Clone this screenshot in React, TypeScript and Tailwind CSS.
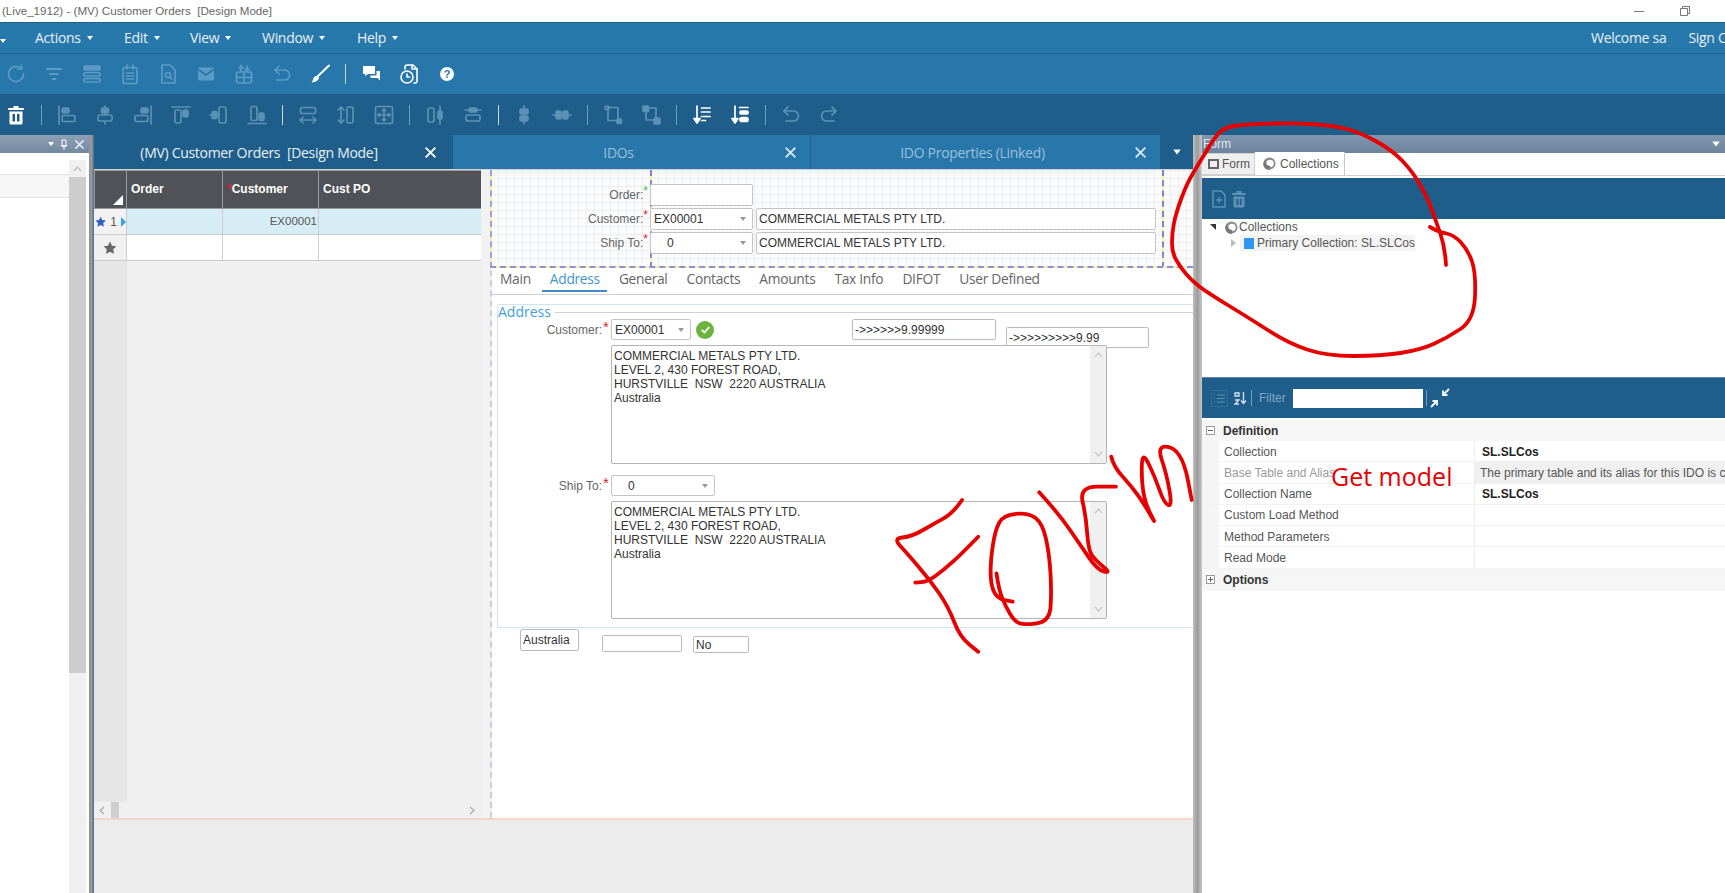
import React from "react";

const ARIAL = "font-['Liberation_Sans',Arial,sans-serif]";
const UI = "font-['Open_Sans',sans-serif]";

function Ic({ children, c = "text-[#5c9bc5]", w = 1.7 }: { children: React.ReactNode; c?: string; w?: number }) {
  return (
    <svg width="24" height="24" viewBox="0 0 24 24" fill="none" stroke="currentColor" strokeWidth={w} strokeLinecap="round" strokeLinejoin="round" className={c}>
      {children}
    </svg>
  );
}

const D2 = "text-[#5b92b6]";
const WH = "text-white";
const D1 = "text-[#5c9bc5]";

function Slot({ children }: { children: React.ReactNode }) {
  return <div className="w-[38px] h-full flex items-center justify-center shrink-0">{children}</div>;
}
function Sep({ bright = false }: { bright?: boolean }) {
  return (
    <div className="w-[13px] h-full flex items-center justify-center shrink-0">
      <div className={`w-[1px] h-[20px] ${bright ? "bg-[#c9d9e5]" : "bg-[#6da0c2]"}`} />
    </div>
  );
}

function Caret({ c = "border-t-white", cls = "" }: { c?: string; cls?: string }) {
  return <span className={`inline-block w-0 h-0 border-l-[3.5px] border-r-[3.5px] border-t-[4px] border-l-transparent border-r-transparent ${c} ${cls}`} />;
}

function MenuItem({ label, w }: { label: string; w: number }) {
  return (
    <div className="flex items-center gap-[6px] shrink-0" style={{ width: w }}>
      <span>{label}</span>
      <Caret />
    </div>
  );
}

function CloseX({ c = "text-white", s = 14 }: { c?: string; s?: number }) {
  return (
    <svg width={s} height={s} viewBox="0 0 14 14" className={`${c} shrink-0`} stroke="currentColor" strokeWidth="2" strokeLinecap="square">
      <path d="M2.5 2.5l9 9M11.5 2.5l-9 9" />
    </svg>
  );
}

function MainTab({ label, w, active, dim, pr }: { label: string; w: number; active?: boolean; dim?: boolean; pr: number }) {
  return (
    <div
      className={`h-full flex items-center border-r border-[#1f5e8a] shrink-0 ${active ? "bg-[#1f5e8a]" : "bg-[#2777aa]"}`}
      style={{ width: w, paddingRight: pr }}
    >
      <span className={`flex-1 text-center whitespace-pre text-[14px] tracking-[-0.3px] ${dim ? "text-[#9cc0da]" : "text-[#e8f0f6]"}`}>{label}</span>
      <CloseX c={dim ? "text-[#dbe8f1]" : "text-white"} s={13} />
    </div>
  );
}

function Star({ c = "text-[#e02020]", cls = "" }: { c?: string; cls?: string }) {
  return <span className={`${c} ${cls} leading-none`}>*</span>;
}

function Combo({ value, w, pad = 3 }: { value: string; w: number; pad?: number }) {
  return (
    <div className="h-full bg-white border border-[#c4c4c4] rounded-[2px] flex items-center justify-between pr-[6px] shrink-0 text-[#333]" style={{ width: w, paddingLeft: pad }}>
      <span>{value}</span>
      <Caret c="border-t-[#999]" />
    </div>
  );
}

function TextBox({ lines, h }: { lines: string[]; h: number }) {
  return (
    <div className="relative ml-[113px] w-[496px] bg-white border border-[#b5b5b5] rounded-[2px] flex text-[12px] leading-[13.9px] text-[#333] shrink-0" style={{ height: h }}>
      <div className="flex-1 pl-[2px] pt-[4px]">
        {lines.map((l, i) => (
          <div key={i} className="whitespace-pre">{l}</div>
        ))}
      </div>
      <div className="w-[16px] bg-[#f0f0f0] flex flex-col items-center justify-between py-[6px] text-[#c8c8c8]">
        <svg width="9" height="6" viewBox="0 0 9 6" fill="none" stroke="currentColor" strokeWidth="1.2"><path d="M1 5l3.5-4L8 5" /></svg>
        <svg width="9" height="6" viewBox="0 0 9 6" fill="none" stroke="currentColor" strokeWidth="1.2"><path d="M1 1l3.5 4L8 1" /></svg>
      </div>
    </div>
  );
}

function Swirl({ cls = "" }: { cls?: string }) {
  return (
    <svg width="13" height="13" viewBox="0 0 12 12" className={`${cls} shrink-0`}>
      <circle cx="6" cy="6" r="5.5" fill="#8a8a8a" />
      <circle cx="6.5" cy="6" r="3.4" fill="#fff" />
      <path d="M6 12a5.5 5.5 0 0 1-4-9.5C1.5 6 3.5 8 7 8.5 6 10 6 11 6 12z" fill="#777" />
    </svg>
  );
}

function Prop({ name, value, bold, gray, shade }: { name: string; value?: string; bold?: boolean; gray?: boolean; shade?: boolean }) {
  return (
    <div className="h-[21.25px] flex border-b border-[#f2f2f2]">
      <div className="w-[17px] bg-[#f5f5f5] shrink-0" />
      <div className={`w-[256px] pl-[5px] pt-[1px] flex items-center shrink-0 border-r border-[#eee] whitespace-nowrap overflow-hidden ${gray ? "text-[#999]" : "text-[#555]"}`}>{name}</div>
      <div className={`flex-1 flex items-center pl-[5px] pt-[1px] whitespace-nowrap overflow-hidden ${bold ? "font-bold text-[#222] pl-[7px]" : "text-[#555]"} ${shade ? "bg-[#f0f0f0]" : ""}`}>{value}</div>
    </div>
  );
}

function Section({ open, label, h }: { open: boolean; label: string; h: string }) {
  return (
    <div className={`${h} bg-[#f6f6f6] flex items-center pl-[4px]`}>
      <div className="w-[9px] h-[9px] border border-[#999] flex items-center justify-center relative bg-white mr-[8px]">
        <div className="w-[5px] h-[1px] bg-[#666]" />
        {!open && <div className="absolute w-[1px] h-[5px] bg-[#666]" />}
      </div>
      <span className="font-bold text-[#333]">{label}</span>
    </div>
  );
}

/* ---------- hand-drawn annotation ---------- */
type P = [number, number];
function path(ox: number, sx: number, oy: number, pts: P[], sy = 3) {
  const m = pts.map(([x, y]) => [ox + x / sx, oy + y / sy] as P);
  let d = `M${m[0][0].toFixed(1)} ${m[0][1].toFixed(1)}`;
  for (let i = 1; i < m.length - 1; i++) {
    const mx = (m[i][0] + m[i + 1][0]) / 2;
    const my = (m[i][1] + m[i + 1][1]) / 2;
    d += ` Q${m[i][0].toFixed(1)} ${m[i][1].toFixed(1)} ${mx.toFixed(1)} ${my.toFixed(1)}`;
  }
  const l = m[m.length - 1];
  d += ` L${l[0].toFixed(1)} ${l[1].toFixed(1)}`;
  return d;
}

const strokes: string[] = [
  path(0, 1, 0, [[1446, 265], [1445, 247], [1435.5, 220], [1428.5, 200], [1413, 172], [1392, 150], [1361, 133], [1336, 126], [1298, 123], [1249, 124], [1225, 127], [1215, 137], [1201, 160], [1187, 183], [1176, 213], [1172, 233], [1172, 253], [1181, 268], [1192, 281], [1208, 293], [1249, 318], [1288, 343], [1326, 356], [1381, 356], [1420, 350], [1447, 338], [1474, 320], [1476, 273], [1468, 250], [1454, 235], [1439, 232], [1430, 227]], 1),
  path(480, 2.178, 260, [[1050, 720], [1030, 760], [990, 790], [940, 830], [900, 835], [930, 880], [980, 960], [1020, 1040], [1045, 1130], [1085, 1175]]),
  path(480, 2.178, 260, [[1085, 830], [1050, 880], [1010, 930], [975, 965], [948, 968]]),
  path(480, 2.178, 260, [[1125, 940], [1130, 990], [1145, 1040], [1165, 1085], [1185, 1095], [1240, 1085], [1245, 1000], [1240, 880], [1225, 790], [1195, 758], [1140, 765], [1122, 810], [1112, 900], [1112, 970], [1125, 1015], [1160, 1025]]),
  path(480, 2.178, 260, [[1218, 697], [1260, 760], [1310, 860], [1345, 930], [1375, 940], [1340, 900], [1325, 870], [1320, 770], [1305, 680], [1385, 680]]),
  path(480, 2.178, 260, [[1375, 590], [1380, 620], [1420, 680], [1450, 740], [1475, 800], [1445, 720], [1440, 620], [1445, 580], [1470, 650], [1490, 730], [1508, 740], [1495, 640], [1475, 560], [1510, 560], [1535, 610], [1550, 720]]),
];

const ADDRESS = ["COMMERCIAL METALS PTY LTD.", "LEVEL 2, 430 FOREST ROAD,", "HURSTVILLE  NSW  2220 AUSTRALIA", "Australia"];

export default function App() {
  return (
    <div className={`relative w-[1725px] h-[893px] overflow-hidden bg-white ${UI}`}>
      {/* title bar */}
      <div className={`h-[23px] border-b border-[#1d5f88] bg-white flex items-center text-[11.6px] text-[#666] ${ARIAL}`}>
        <span className="pl-[2px] whitespace-pre flex-1">(Live_1912) - (MV) Customer Orders  [Design Mode]</span>
        <div className="w-[10px] h-[1px] bg-[#777] mr-[36px]" />
        <svg width="10" height="10" viewBox="0 0 10 10" fill="none" stroke="#777" className="mr-[35px]"><path d="M.5 2.5h7v7h-7zM2.5 2.5v-2h7v7h-2" /></svg>
      </div>

      {/* menu */}
      <div className="h-[31px] bg-[#2778ab] border-b border-[#1f6491] flex items-center pb-[1px] text-[14px] tracking-[-0.3px] text-[#e9f1f7]">
        <div className="w-[35px] shrink-0"><Caret /></div>
        <MenuItem label="Actions" w={89} />
        <MenuItem label="Edit" w={66} />
        <MenuItem label="View" w={72} />
        <MenuItem label="Window" w={95} />
        <MenuItem label="Help" w={60} />
        <div className="flex-1" />
        <div className="w-[134px] overflow-hidden whitespace-nowrap flex shrink-0 gap-[22px]">
          <span>Welcome sa</span>
          <span>Sign Out</span>
        </div>
      </div>

      {/* toolbar 1 */}
      <div className="h-[40px] bg-[#2777aa] flex items-center ml-[-3px]">
        <Slot><Ic><path d="M19.5 12a7.5 7.5 0 1 1-2.4-5.5" /><path d="M17.5 3v4h-4" /></Ic></Slot>
        <Slot><Ic w={2}><path d="M5 7h14M8 12h8M10.5 17h3" /></Ic></Slot>
        <Slot><Ic><rect x="4" y="4" width="16" height="4" rx="1" fill="currentColor" /><rect x="4" y="10.5" width="16" height="3.5" rx="1" /><rect x="4" y="16.5" width="16" height="3.5" rx="1" /></Ic></Slot>
        <Slot><Ic><rect x="5" y="5.5" width="14" height="16" rx="2" /><path d="M9 3v4M15 3v4M8.5 11h7M8.5 14h7M8.5 17h7" /></Ic></Slot>
        <Slot><Ic><path d="M6 3h8l5 5v13H6z" /><circle cx="12" cy="13" r="2.5" /><path d="M14 15l2 2" /></Ic></Slot>
        <Slot><svg width="24" height="24" viewBox="0 0 24 24" className={D1}><rect x="4" y="5.5" width="16" height="13" rx="1.5" fill="currentColor" /><path d="M4.5 7.5L12 13l7.5-5.5" fill="none" stroke="#2777aa" strokeWidth="1.6" /></svg></Slot>
        <Slot><Ic><rect x="4.5" y="10" width="15" height="11" rx="1.5" /><path d="M4.5 15.5h15M12 10v11" /><path d="M9 9V4M7 6l2-2.5L11 6" /><path d="M15 4v5M13 7l2 2 2-2" /></Ic></Slot>
        <Slot><Ic><path d="M5 8h9.5a5 5 0 0 1 0 10H7" /><path d="M9 4L5 8l4 4" /></Ic></Slot>
        <Slot><svg width="24" height="24" viewBox="0 0 24 24" className={WH}><path d="M21 3.5L9.5 14.5" stroke="currentColor" strokeWidth="2" strokeLinecap="round" /><path d="M8.5 14c2 0 3 1.500 2 3.200-1.200 2-4 3-7 3.300 1.500-1.500 1.300-3 2-4.500.5-1.200 1.700-2 3-2z" fill="currentColor" /></svg></Slot>
        <Sep bright />
        <Slot><svg width="24" height="24" viewBox="0 0 24 24" className={WH} fill="currentColor"><path d="M4 4h12v8H9l-3 2v-2H4z" /><path d="M17.500 9H21v9.500l-2.500-2.500H11.500v-2.500h6z" /></svg></Slot>
        <Slot><Ic c={WH} w={1.6}><path d="M8 7V4.500a2 2 0 0 1 2-1.500h6l4 4v12a2 2 0 0 1-2 2h-1" /><path d="M15 3v4h5" /><circle cx="10" cy="15" r="6" /><path d="M10 12v3h2.500" /></Ic></Slot>
        <Slot><div className={`w-[14px] h-[14px] rounded-full bg-white text-[#2777aa] text-[11px] font-bold flex items-center justify-center leading-none ${ARIAL}`}>?</div></Slot>
      </div>

      {/* toolbar 2 */}
      <div className="h-[41px] bg-[#1f5e8a] flex items-center ml-[-3px]">
        <Slot><svg width="24" height="24" viewBox="0 0 24 24" className={WH} fill="currentColor"><rect x="4" y="5" width="16" height="2" rx="1" /><rect x="9.500" y="3" width="5" height="2" /><path d="M5.500 8.500h13V20a1.500 1.500 0 0 1-1.500 1.500H7A1.500 1.500 0 0 1 5.500 20z" /><rect x="8.500" y="11" width="2.500" height="7.500" fill="#1f5e8a" /><rect x="13" y="11" width="2.500" height="7.500" fill="#1f5e8a" /></svg></Slot>
        <Sep />
        <Slot><Ic c={D2}><path d="M4 3v18" /><rect x="7" y="5" width="7" height="5" rx="1.500" fill="currentColor" /><rect x="7" y="12.500" width="13" height="6" rx="1.500" /></Ic></Slot>
        <Slot><Ic c={D2}><path d="M12 3v18" /><rect x="8.500" y="5" width="7" height="5" rx="1.500" fill="currentColor" /><rect x="5" y="12" width="14" height="6" rx="1.500" fill="#1f5e8a" /></Ic></Slot>
        <Slot><Ic c={D2}><path d="M20 3v18" /><rect x="10" y="5" width="7" height="5" rx="1.500" fill="currentColor" /><rect x="4" y="12.500" width="13" height="6" rx="1.500" /></Ic></Slot>
        <Slot><Ic c={D2}><path d="M3 4h18" /><rect x="6" y="7" width="6" height="13" rx="1.500" /><rect x="14" y="7" width="5" height="7" rx="1.500" fill="currentColor" /></Ic></Slot>
        <Slot><Ic c={D2}><path d="M3 12h8" /><rect x="5" y="8.500" width="5" height="7" rx="1.500" fill="currentColor" /><rect x="12" y="4" width="7" height="16" rx="2" /></Ic></Slot>
        <Slot><Ic c={D2}><path d="M3 20.500h18" /><rect x="6" y="3.500" width="6" height="14" rx="1.500" /><rect x="14" y="10" width="5" height="7.500" rx="1.500" fill="currentColor" /></Ic></Slot>
        <Sep bright />
        <Slot><Ic c={D2}><rect x="4.500" y="4.500" width="15" height="6" rx="1.500" /><path d="M4 17h16M7 14l-3 3 3 3M17 14l3 3-3 3" /></Ic></Slot>
        <Slot><Ic c={D2}><path d="M7 4v16M4 7l3-3 3 3M4 17l3 3 3-3" /><rect x="13" y="4" width="6" height="16" rx="1.500" /></Ic></Slot>
        <Slot><Ic c={D2}><rect x="3.500" y="3.500" width="17" height="17" rx="1.500" /><path d="M12 6v12M6 12h12M10.500 7.500L12 6l1.500 1.500M10.500 16.500L12 18l1.500-1.500M7.500 10.500L6 12l1.500 1.500M16.500 10.500L18 12l-1.500 1.500" /></Ic></Slot>
        <Sep />
        <Slot><Ic c={D2}><rect x="5" y="5" width="6" height="14" rx="2" /><path d="M17 3v18" /><rect x="15" y="8" width="4" height="8" rx="1.500" fill="currentColor" /></Ic></Slot>
        <Slot><Ic c={D2}><path d="M4 7h16" /><rect x="8" y="5" width="8" height="4" rx="1.500" fill="currentColor" /><rect x="5" y="12" width="14" height="6" rx="2" /></Ic></Slot>
        <Sep bright />
        <Slot><Ic c={D2}><path d="M12 3v18" /><rect x="8" y="6" width="8" height="5" rx="1.500" fill="currentColor" /><rect x="8" y="13" width="8" height="5" rx="1.500" fill="currentColor" /></Ic></Slot>
        <Slot><Ic c={D2}><path d="M3 12h18" /><rect x="6" y="8" width="5" height="8" rx="1.500" fill="currentColor" /><rect x="13" y="8" width="5" height="8" rx="1.500" fill="currentColor" /></Ic></Slot>
        <Sep />
        <Slot><Ic c={D2}><path d="M7 4.500h10v13" /><path d="M7 4.500v13h10" /><rect x="4" y="3" width="4" height="3.500" rx="1" /><rect x="16" y="16" width="4.500" height="4.500" rx="1" fill="currentColor" /></Ic></Slot>
        <Slot><Ic c={D2}><path d="M7 5h10v12H7z" /><rect x="4" y="3" width="5.500" height="5.500" rx="1" fill="currentColor" /><rect x="15" y="15" width="6" height="6" rx="1" fill="currentColor" /></Ic></Slot>
        <Sep />
        <Slot><Ic c={WH}><path d="M7 3v16" /><path d="M4 15.500h6L7 20z" fill="currentColor" /><path d="M11.500 5H20M11.500 9H20M11.500 13.500H20M11.500 17.500h4" /></Ic></Slot>
        <Slot><Ic c={WH}><path d="M7 3v16" /><path d="M4 15.500h6L7 20z" fill="currentColor" /><path d="M11.500 4.500H20" /><rect x="12" y="8" width="8" height="3" rx="1" fill="currentColor" /><rect x="12" y="14.500" width="8" height="4" rx="2" fill="currentColor" /></Ic></Slot>
        <Sep />
        <Slot><Ic c={D2}><path d="M5 8h9.500a5 5 0 0 1 0 10H7" /><path d="M9 4L5 8l4 4" /></Ic></Slot>
        <Slot><Ic c={D2}><path d="M19 8H9.500a5 5 0 0 0 0 10H17" /><path d="M15 4l4 4-4 4" /></Ic></Slot>
      </div>

      {/* workspace */}
      <div className="h-[758px] flex">
        {/* left dock */}
        <div className="w-[89px] flex flex-col shrink-0">
          <div className="h-[18px] bg-gradient-to-b from-[#8ea0b6] to-[#73889f] flex items-center justify-end pr-[4px] gap-[6px] shrink-0">
            <Caret />
            <svg width="8" height="11" viewBox="0 0 8 11" fill="none" stroke="white"><path d="M2 1h4v6H2zM1 7h6M4 7v4" /></svg>
            <CloseX c="text-[#e6edf3]" s={11} />
          </div>
          <div className="flex-1 flex">
            <div className="w-[69px] pt-[21px]">
              <div className="h-[24px] bg-[#f6f6f6] border-y border-[#e4e4e4]" />
            </div>
            <div className="w-[17px] mt-[7px] bg-[#f0f0f0] flex flex-col">
              <div className="h-[17px] flex items-center justify-center text-[#bbb]">
                <svg width="9" height="6" viewBox="0 0 9 6" fill="none" stroke="currentColor" strokeWidth="1.200"><path d="M1 5l3.500-4L8 5" /></svg>
              </div>
              <div className="h-[496px] bg-[#cdcdcd]" />
            </div>
          </div>
        </div>
        <div className="w-[5px] shrink-0 bg-gradient-to-r from-[#8f8f8f] via-[#9a9a9a] to-[#3d6f93]" />

        {/* main */}
        <div className="w-[1099px] shrink-0 flex flex-col">
          <div className="h-[35px] flex items-stretch border-b border-[#d5d5d5] shrink-0">
            <MainTab label="(MV) Customer Orders  [Design Mode]" w={359} active pr={15} />
            <MainTab label="IDOs" w={358} dim pr={13} />
            <MainTab label="IDO Properties (Linked)" w={350} dim pr={13} />
            <div className="w-[32px] bg-[#1f5e8a] flex items-center justify-center"><Caret cls="scale-125" /></div>
          </div>

          <div className="h-[648px] flex shrink-0">
            {/* collection grid */}
            <div className={`w-[396px] shrink-0 flex flex-col bg-[#f2f2f2] text-[12px] ${ARIAL}`}>
              <div className="w-[387px] h-[39px] grid grid-cols-[33px_96px_96px_162px] bg-[#505258] border-y border-[#999] font-bold text-white shrink-0">
                <div className="border-x border-[#999] relative">
                  <div className="absolute right-[3px] bottom-[3px] w-0 h-0 border-l-[10px] border-b-[10px] border-l-transparent border-b-white" />
                </div>
                <div className="border-r border-[#999] pl-[4px] pt-[9px]">Order</div>
                <div className="border-r border-[#999] pl-[4px] pt-[9px]"><span className="text-[#e02020]">*</span>Customer</div>
                <div className="pl-[4px] pt-[9px]">Cust PO</div>
              </div>
              <div className="w-[387px] h-[26px] grid grid-cols-[33px_96px_96px_162px] bg-[#d7edf6] border-b border-[#ccc] text-[#555] shrink-0">
                <div className="bg-[#f2f2f2] border-r border-[#ccc] flex items-center pl-[1px] gap-[4px]">
                  <svg width="12" height="12" viewBox="0 0 24 24" fill="#2d62c8"><path d="M12 1l3.400 7 7.600 1-5.500 5.300L18.800 22 12 18.300 5.200 22l1.300-7.700L1 9l7.600-1z" /></svg>
                  <span className="text-[#555]">1</span>
                  <span className="w-0 h-0 border-y-[5px] border-l-[5px] border-y-transparent border-l-[#3ba0ea]" />
                </div>
                <div className="border-r border-[#ccc]" />
                <div className="border-r border-[#ccc] flex items-center justify-end pr-[1px] text-[11.5px]">EX00001</div>
                <div />
              </div>
              <div className="w-[387px] h-[26px] grid grid-cols-[33px_96px_96px_162px] bg-white border-b border-[#ccc] shrink-0">
                <div className="bg-[#f0f0f0] border-r border-[#ccc] flex items-center justify-center">
                  <svg width="14" height="14" viewBox="0 0 24 24" fill="#666"><path d="M12 1l3.400 7 7.600 1-5.500 5.300L18.800 22 12 18.300 5.200 22l1.300-7.700L1 9l7.600-1z" /></svg>
                </div>
                <div className="border-r border-[#ccc]" />
                <div className="border-r border-[#ccc]" />
                <div />
              </div>
              <div className="w-[387px] flex-1 flex">
                <div className="w-[33px] bg-[#e6e6e6]" />
                <div className="flex-1 bg-[#f0f0f0]" />
              </div>
              <div className="w-[387px] h-[16px] bg-[#f0f0f0] flex items-center shrink-0 text-[#aaa]">
                <svg width="8" height="9" viewBox="0 0 8 9" fill="none" stroke="currentColor" strokeWidth="1.200" className="ml-[4px]"><path d="M6 1L2 4.500 6 8" /></svg>
                <div className="w-[8px] h-full bg-[#cfcfcf] ml-[5px]" />
                <div className="flex-1" />
                <svg width="8" height="9" viewBox="0 0 8 9" fill="none" stroke="currentColor" strokeWidth="1.200" className="mr-[5px]"><path d="M2 1l4 3.500L2 8" /></svg>
              </div>
            </div>

            {/* form canvas */}
            <div className={`relative flex-1 flex flex-col bg-white text-[12px] ${ARIAL}`}>
              <div className="absolute left-0 top-0 bottom-0 w-[2px] bg-[#eef6e6] border-l-2 border-dashed border-[#c4d0ea]" />
              <div className="relative h-[98px] shrink-0 pt-[14px] flex flex-col gap-[2px] bg-[#fbfbfb] bg-[linear-gradient(#edf0f2_1px,transparent_1px),linear-gradient(90deg,#edf0f2_1px,transparent_1px)] bg-[size:8px_8px]">
                <div className="absolute left-0 top-0 bottom-0 w-[2px] bg-[#f6f2a0] border-l-2 border-dashed border-[#9ea2dc]" />
                <div className="absolute left-[160px] top-0 bottom-0 w-[2px] bg-[#f6f2a0] border-l-2 border-dashed border-[#7f83d2]" />
                <div className="absolute left-[672px] top-0 bottom-0 w-[2px] bg-[#f6f2a0] border-l-2 border-dashed border-[#7f83d2]" />
                <div className="absolute left-0 right-0 bottom-0 h-[2px] bg-[#f6f2a0] border-b-2 border-dashed border-[#8d90d8]" />
                <div className="flex h-[22px] relative">
                  <div className="w-[160px] flex items-center justify-end text-[#666] pr-[2px]">Order:<Star c="text-[#35c24a]" cls="self-start mt-[1px]" /></div>
                  <div className="w-[103px] bg-white border border-[#c4c4c4] rounded-[2px]" />
                </div>
                <div className="flex h-[22px] relative">
                  <div className="w-[160px] flex items-center justify-end text-[#666] pr-[2px]">Customer:<Star cls="self-start mt-[1px]" /></div>
                  <Combo value="EX00001" w={103} />
                  <div className="ml-[3px] w-[400px] bg-white border border-[#c4c4c4] rounded-[2px] flex items-center pl-[2px] text-[#333]">COMMERCIAL METALS PTY LTD.</div>
                </div>
                <div className="flex h-[22px] relative">
                  <div className="w-[160px] flex items-center justify-end text-[#666] pr-[2px]">Ship To:<Star cls="self-start mt-[1px]" /></div>
                  <Combo value="0" w={103} pad={16} />
                  <div className="ml-[3px] w-[400px] bg-white border border-[#c4c4c4] rounded-[2px] flex items-center pl-[2px] text-[#333]">COMMERCIAL METALS PTY LTD.</div>
                </div>
              </div>

              {/* form tabs */}
              <div className={`h-[27px] shrink-0 flex items-center gap-[19px] pl-[8px] border-b border-[#d0d0d0] ml-[2px] pb-[4px] text-[13.8px] tracking-[-0.3px] text-[#666] ${UI}`}>
                <span>Main</span>
                <span className="relative text-[#3f96d0]">
                  Address
                  <span className="absolute left-[-8px] right-[-7px] top-[21px] h-[2px] bg-[#3f8fc4]" />
                </span>
                <span>General</span>
                <span>Contacts</span>
                <span>Amounts</span>
                <span>Tax Info</span>
                <span>DIFOT</span>
                <span>User Defined</span>
              </div>

              {/* group box */}
              <div className="ml-[7px] mt-[9px] h-[324px] shrink-0 border border-r-0 border-[#cfe4f2] rounded-l-[2px] flex flex-col">
                <div className="h-[14px] flex items-center shrink-0">
                  <span className={`text-[14px] text-[#3fa0e0] leading-none ${UI}`}>Address</span>
                  <div className="flex-1 h-[1px] bg-[#d0d0d0] ml-[4px]" />
                </div>
                <div className="flex h-[21px] shrink-0">
                  <div className="w-[104px] text-right text-[#666] self-center">Customer:</div>
                  <div className="w-[9px] text-[15px] text-[#e02020] leading-none pl-[1px]">*</div>
                  <Combo value="EX00001" w={80} />
                  <div className="ml-[5px] self-center w-[18px] h-[18px] rounded-full bg-[#6cb33f] flex items-center justify-center shrink-0">
                    <svg width="11" height="11" viewBox="0 0 12 12" fill="none" stroke="white" strokeWidth="2"><path d="M2 6.500l2.800 2.800L10 3.500" /></svg>
                  </div>
                  <div className="ml-[138px] w-[144px] h-[21px] bg-white border border-[#bbb] rounded-[2px] flex items-center pl-[2px] text-[#333] shrink-0">-&gt;&gt;&gt;&gt;&gt;&gt;9.99999</div>
                  <div className="ml-[10px] mt-[8px] w-[143px] h-[21px] bg-white border border-[#bbb] rounded-[2px] flex items-center pl-[2px] text-[#333] shrink-0">-&gt;&gt;&gt;&gt;&gt;&gt;&gt;&gt;&gt;9.99</div>
                </div>
                <div className="h-[5px] shrink-0" />
                <TextBox lines={ADDRESS} h={119} />
                <div className="flex h-[21px] mt-[11px] shrink-0">
                  <div className="w-[104px] text-right text-[#666] self-center">Ship To:</div>
                  <div className="w-[9px] text-[15px] text-[#e02020] leading-none pl-[1px]">*</div>
                  <Combo value="0" w={104} pad={16} />
                </div>
                <div className="h-[5px] shrink-0" />
                <TextBox lines={ADDRESS} h={118} />
              </div>

              {/* trailing inputs */}
              <div className="flex items-start ml-[30px] mt-[1px] text-[#333]">
                <div className="w-[59px] h-[22px] border border-[#bbb] rounded-[2px] flex items-center pl-[2px]">Australia</div>
                <div className="ml-[23px] mt-[6px] w-[80px] h-[17px] border border-[#bbb] rounded-[2px]" />
                <div className="ml-[11px] mt-[7px] w-[56px] h-[17px] border border-[#bbb] rounded-[2px] pl-[2px] flex items-end leading-none pb-[1px]">No</div>
              </div>
            </div>
          </div>

          <div className="h-[2px] bg-[#f3d6ca] shrink-0" />
          <div className="flex-1 bg-[#ececec]" />
        </div>

        <div className="w-[9px] shrink-0 bg-gradient-to-r from-[#bdbdbd] via-[#9c9c9c] to-[#c8c8c8]" />

        {/* right dock */}
        <div className={`flex-1 flex flex-col text-[12px] min-w-0 ${ARIAL}`}>
          <div className="h-[18px] bg-gradient-to-b from-[#8096ae] to-[#6e849e] text-[#e2e8ef] flex items-center pl-[1px] pr-[6px] justify-between shrink-0">
            <span>Form</span>
            <Caret cls="scale-125" />
          </div>
          <div className="h-[23px] flex items-end border-b border-[#cfcfcf] shrink-0 text-[#555]">
            <div className="w-[54px] h-[22px] bg-[#efefef] border border-[#d0d0d0] flex items-center pl-[6px] gap-[3px] ml-[-1px]">
              <div className="w-[11px] h-[10px] border-2 border-[#666]" />
              <span>Form</span>
            </div>
            <div className="w-[90px] h-[23px] bg-white border-r border-[#c8c8c8] flex items-center pl-[8px] gap-[4px]">
              <Swirl />
              <span>Collections</span>
            </div>
          </div>
          <div className="h-[2px] shrink-0" />
          <div className="h-[41px] bg-[#1f5e8a] flex items-center pl-[8px] shrink-0">
            <svg width="18" height="20" viewBox="0 0 18 20" fill="none" stroke="#5b92b6" strokeWidth="1.500" strokeLinejoin="round"><path d="M3 2h8l4 4v12H3z" /><path d="M9 8v6M6 11h6" /></svg>
            <svg width="18" height="20" viewBox="0 0 18 20" className="ml-[2px]" fill="#5b92b6"><rect x="2" y="4" width="14" height="2" rx="1" /><rect x="6.500" y="2" width="5" height="2" /><path d="M3.500 7.500h11V17a1.500 1.500 0 0 1-1.500 1.500H5A1.500 1.500 0 0 1 3.500 17z" /><rect x="6.500" y="10" width="1.800" height="6" fill="#1f5e8a" /><rect x="9.800" y="10" width="1.800" height="6" fill="#1f5e8a" /></svg>
          </div>
          <div className="h-[158px] bg-white text-[#555] shrink-0">
            <div className="h-[16px] flex items-center">
              <span className="ml-[8px] w-0 h-0 border-l-[6px] border-t-[6px] border-l-transparent border-t-[#333]" />
              <Swirl cls="ml-[9px]" />
              <span className="ml-[1px]">Collections</span>
            </div>
            <div className="h-[16px] flex items-center">
              <span className="ml-[29px] w-0 h-0 border-y-[4px] border-l-[5px] border-y-transparent border-l-[#bbb]" />
              <div className="ml-[4px] w-[175px] h-full bg-[#f3f3f3] flex items-center pl-[4px] gap-[3px]">
                <span className="w-[11px] h-[11px] bg-[#2f97ee]" />
                <span className="whitespace-nowrap">Primary Collection: SL.SLCos</span>
              </div>
            </div>
          </div>
          <div className="h-[41px] bg-[#1f5e8a] border-t border-[#5f87a5] flex items-center pl-[9px] shrink-0">
            <div className="w-[17px] h-[17px] border border-[#2f6f9b] flex items-center justify-center">
              <svg width="13" height="11" viewBox="0 0 13 11" stroke="#5b92b6" strokeWidth="1.200"><path d="M1 2h1M4 2h8M1 5.500h1M4 5.500h8M1 9h1M4 9h8" /></svg>
            </div>
            <svg width="14" height="16" viewBox="0 0 14 16" fill="none" stroke="#d5e3ee" strokeWidth="1.300" className="ml-[5px]"><path d="M2 3h4v3H2zM2 10l4 0-4 4h4M10.500 2v11M8 10.500l2.500 3 2.500-3" /></svg>
            <div className="w-[1px] h-[16px] bg-[#6da0c2] ml-[4px]" />
            <span className="ml-[7px] text-[#7fa9c6]">Filter</span>
            <div className="ml-[7px] w-[130px] h-[19px] bg-white shrink-0" />
            <div className="w-[1px] h-[16px] bg-[#6da0c2] ml-[3px]" />
            <svg width="20" height="20" viewBox="0 0 20 20" fill="none" stroke="white" strokeWidth="1.800" className="ml-[3px]"><path d="M19 1l-6 6M13 2.500V7h4.500" /><path d="M1 19l6-6M7 17.500V13H2.500" /></svg>
          </div>
          <div className="h-[2px] shrink-0" />
          <div className="flex-1 bg-white">
            <Section open label="Definition" h="h-[21px]" />
            <Prop name="Collection" value="SL.SLCos" bold />
            <Prop name="Base Table and Alias" gray value="The primary table and its alias for this IDO is configured here" shade />
            <Prop name="Collection Name" value="SL.SLCos" bold />
            <Prop name="Custom Load Method" />
            <Prop name="Method Parameters" />
            <Prop name="Read Mode" />
            <Section open={false} label="Options" h="h-[22px]" />
          </div>
        </div>
      </div>

      {/* red pen annotations */}
      <svg className="absolute left-0 top-0 pointer-events-none" width="1725" height="893" fill="none" stroke="#e60000" strokeWidth="3.800" strokeLinecap="round" strokeLinejoin="round">
        {strokes.map((d, i) => (
          <path key={i} d={d} />
        ))}
      </svg>
      <div className="absolute left-[1331px] top-[459px] text-[25px] leading-[34px] text-[#e60000] font-['Open_Sans',sans-serif]">Get model</div>
    </div>
  );
}
